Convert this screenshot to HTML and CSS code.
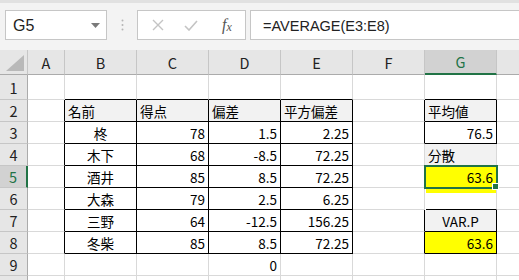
FILE: index.html
```html
<!DOCTYPE html>
<html lang="ja">
<head>
    <meta charset="UTF-8">
    <title>Sheet1</title>
    <link rel="stylesheet" href="styles.css">
</head>
<body>
    <div class="ribbon-edge"></div>

    <div class="formula-bar">
        <div class="name-box">
            <span>G5</span>
            <svg class="drop" width="9" height="5" viewBox="0 0 9 5"><path d="M0 0h9L4.5 5z" fill="#7a7a7a"/></svg>
        </div>
        <div class="grip">
            <svg width="3" height="12" viewBox="0 0 3 12"><circle cx="1.5" cy="1.5" r="1" fill="#b5b5b5"/><circle cx="1.5" cy="6" r="1" fill="#b5b5b5"/><circle cx="1.5" cy="10.5" r="1" fill="#b5b5b5"/></svg>
        </div>
        <div class="fx-box">
            <svg class="btn" width="12" height="12" viewBox="0 0 12 12"><path d="M1 1l10 10M11 1L1 11" stroke="#c4c4c4" stroke-width="1.4"/></svg>
            <svg class="btn" width="14" height="11" viewBox="0 0 14 11"><path d="M1 6l4 4L13 1" stroke="#c4c4c4" stroke-width="1.6" fill="none"/></svg>
            <span class="fx">f<span class="fx-x">x</span></span>
        </div>
        <div class="formula-input">=AVERAGE(E3:E8)</div>
    </div>

    <div class="sheet">
        <!-- column headers -->
        <div class="corner"><svg width="18" height="16" viewBox="0 0 18 16"><path d="M18 0V16H0z" fill="#b9b9b9"/></svg></div>
        <div class="ch">A</div>
        <div class="ch">B</div>
        <div class="ch">C</div>
        <div class="ch">D</div>
        <div class="ch">E</div>
        <div class="ch">F</div>
        <div class="ch sel">G</div>
        <div class="ch"></div>

        <!-- row 1 -->
        <div class="rh">1</div>
        <div class="c"></div>
        <div class="c bb"></div>
        <div class="c bb"></div>
        <div class="c bb"></div>
        <div class="c bb"></div>
        <div class="c"></div>
        <div class="c bb"></div>
        <div class="c"></div>

        <!-- row 2 -->
        <div class="rh">2</div>
        <div class="c br"></div>
        <div class="c box hd">名前</div>
        <div class="c box hd">得点</div>
        <div class="c box hd">偏差</div>
        <div class="c box hd">平方偏差</div>
        <div class="c br"></div>
        <div class="c box hd">平均値</div>
        <div class="c"></div>

        <!-- row 3 -->
        <div class="rh">3</div>
        <div class="c br"></div>
        <div class="c box mid">柊</div>
        <div class="c box num">78</div>
        <div class="c box num">1.5</div>
        <div class="c box num">2.25</div>
        <div class="c br"></div>
        <div class="c box num">76.5</div>
        <div class="c"></div>

        <!-- row 4 -->
        <div class="rh">4</div>
        <div class="c br"></div>
        <div class="c box mid">木下</div>
        <div class="c box num">68</div>
        <div class="c box num">-8.5</div>
        <div class="c box num">72.25</div>
        <div class="c"></div>
        <div class="c hd">分散</div>
        <div class="c"></div>

        <!-- row 5 -->
        <div class="rh sel">5</div>
        <div class="c br"></div>
        <div class="c box mid">酒井</div>
        <div class="c box num">85</div>
        <div class="c box num">8.5</div>
        <div class="c box num">72.25</div>
        <div class="c"></div>
        <div class="c num yel active">63.6<span class="handle"></span></div>
        <div class="c"></div>

        <!-- row 6 -->
        <div class="rh">6</div>
        <div class="c br"></div>
        <div class="c box mid">大森</div>
        <div class="c box num">79</div>
        <div class="c box num">2.5</div>
        <div class="c box num">6.25</div>
        <div class="c"></div>
        <div class="c smear bb"></div>
        <div class="c"></div>

        <!-- row 7 -->
        <div class="rh">7</div>
        <div class="c br"></div>
        <div class="c box mid">三野</div>
        <div class="c box num">64</div>
        <div class="c box num">-12.5</div>
        <div class="c box num">156.25</div>
        <div class="c br"></div>
        <div class="c box hd mid">VAR.P</div>
        <div class="c"></div>

        <!-- row 8 -->
        <div class="rh">8</div>
        <div class="c br"></div>
        <div class="c box mid">冬柴</div>
        <div class="c box num">85</div>
        <div class="c box num">8.5</div>
        <div class="c box num">72.25</div>
        <div class="c br"></div>
        <div class="c box num yel">63.6</div>
        <div class="c"></div>

        <!-- row 9 -->
        <div class="rh">9</div>
        <div class="c"></div>
        <div class="c"></div>
        <div class="c"></div>
        <div class="c num">0</div>
        <div class="c"></div>
        <div class="c"></div>
        <div class="c"></div>
        <div class="c"></div>

        <!-- row 10, only its top edge shows -->
        <div class="rh"></div>
        <div class="c"></div>
        <div class="c"></div>
        <div class="c"></div>
        <div class="c"></div>
        <div class="c"></div>
        <div class="c"></div>
        <div class="c"></div>
        <div class="c"></div>
    </div>
</body>
</html>
```

FILE: styles.css
```css
body {
    margin: 0;
    width: 519px;
    height: 280px;
    overflow: hidden;
    background: #f3f3f3;
    font-family: "Noto Sans CJK JP", sans-serif;
}
.ribbon-edge {
    height: 3px;
    background: #e1e1e1;
}
.formula-bar {
    display: flex;
    align-items: stretch;
    height: 30px;
    margin-top: 7px;
    padding-left: 5px;
}
.name-box {
    width: 102px;
    display: flex;
    align-items: center;
    justify-content: space-between;
    padding: 0 6px 0 7px;
    box-sizing: border-box;
    background: #fff;
    border: 1px solid #c6c6c6;
    font-family: "Liberation Sans", sans-serif;
    font-size: 16px;
    color: #222;
}
.name-box span {
    padding-top: 2px;
}
.grip {
    width: 30px;
    display: flex;
    align-items: center;
    justify-content: center;
}
.fx-box {
    width: 109px;
    display: flex;
    align-items: center;
    box-sizing: border-box;
    background: #fff;
    border: 1px solid #c6c6c6;
    padding-left: 14px;
}
.fx-box .btn {
    margin-right: 20px;
}
.fx-box .btn + .btn {
    margin-right: 24px;
}
.fx {
    font-family: "Liberation Serif", serif;
    font-style: italic;
    font-size: 16px;
    color: #555;
}
.fx-x {
    font-size: 12px;
    position: relative;
    top: 1px;
}
.formula-input {
    flex: 1;
    display: flex;
    align-items: center;
    margin-left: 4px;
    padding-left: 12px;
    padding-top: 1px;
    background: #fff;
    border: 1px solid #c6c6c6;
    border-right: none;
    font-family: "Liberation Sans", sans-serif;
    font-size: 14.5px;
    color: #222;
}

.sheet {
    display: grid;
    grid-template-columns: 28px 37px repeat(7, 72px);
    grid-template-rows: 25px 25px repeat(9, 22px);
    margin-top: 10px;
    background: #fff;
    font-size: 13.5px;
    color: #000;
}
.corner {
    background: #e6e6e6;
    border-right: 1px solid #c6c6c6;
    border-bottom: 1px solid #ababab;
    display: flex;
    align-items: flex-end;
    justify-content: flex-end;
    padding: 0 3px 3px 0;
}
.ch {
    display: flex;
    align-items: center;
    justify-content: center;
    background: #e6e6e6;
    border-right: 1px solid #c6c6c6;
    border-bottom: 1px solid #ababab;
    color: #222;
    font-size: 14.5px;
}
.rh {
    display: flex;
    align-items: center;
    justify-content: center;
    background: #e6e6e6;
    border-right: 1px solid #ababab;
    border-bottom: 1px solid #c6c6c6;
    color: #222;
    font-size: 14.5px;
}
.ch.sel {
    background: #d2d2d2;
    border-bottom: 2px solid #217346;
    color: #217346;
}
.rh.sel {
    background: #d2d2d2;
    border-right: 2px solid #217346;
    color: #217346;
}
.c {
    position: relative;
    display: flex;
    align-items: center;
    padding: 1px 3px 0;
    border-right: 1px solid #d9d9d9;
    border-bottom: 1px solid #d9d9d9;
    white-space: nowrap;
}
.sheet > div {
    box-sizing: border-box;
}
.num {
    justify-content: flex-end;
}
.mid {
    justify-content: center;
}
.hd {
    background: #f2f2f2;
}
.yel {
    background: #ffff00;
}
.box {
    border-right-color: #000;
    border-bottom-color: #000;
}
.br {
    border-right-color: #000;
}
.bb {
    border-bottom-color: #000;
}
.smear {
    background: linear-gradient(#ffff00 0 5px, transparent 5px);
    background-clip: content-box;
    padding: 0;
    margin: 0 0 0 1px;
    border-right: 1px solid #d9d9d9;
}
.active {
    outline: 2px solid #217346;
    outline-offset: -1px;
    z-index: 1;
}
.handle {
    position: absolute;
    right: -3px;
    bottom: -3px;
    width: 5px;
    height: 5px;
    background: #217346;
    border: 1px solid #fff;
}
```
